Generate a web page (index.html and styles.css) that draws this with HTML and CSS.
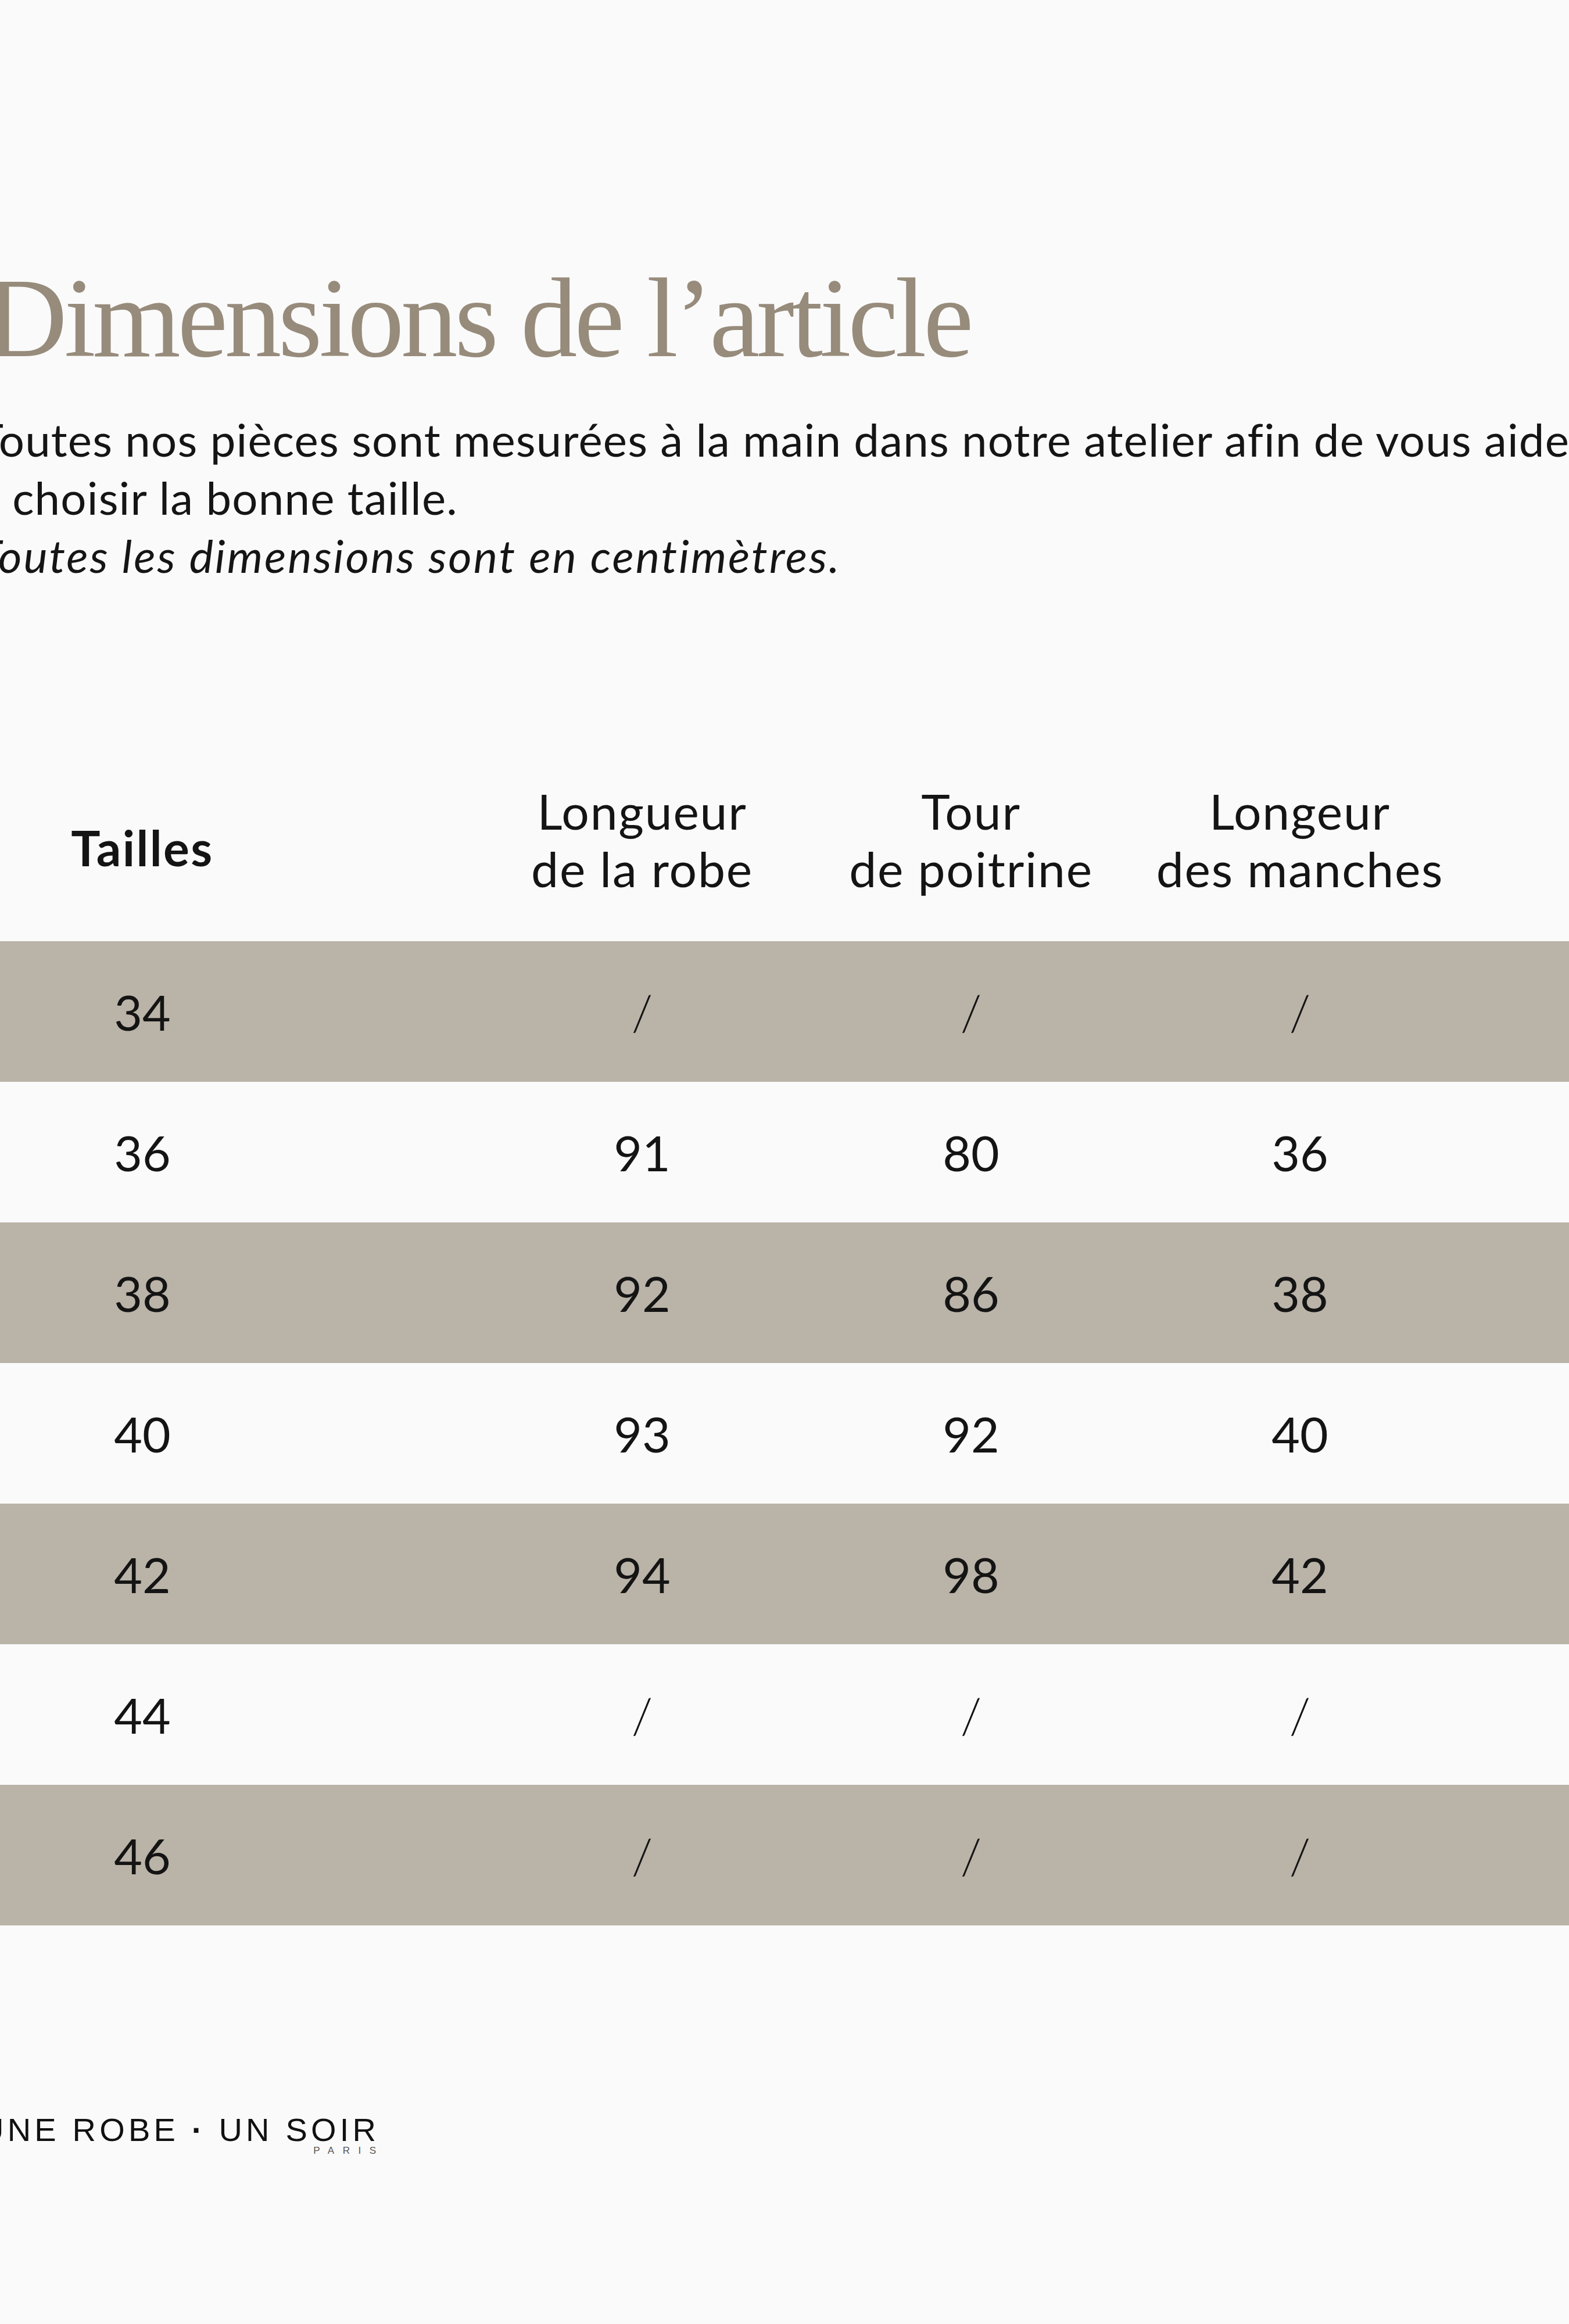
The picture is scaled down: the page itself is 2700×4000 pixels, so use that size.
FILE: index.html
```html
<!DOCTYPE html>
<html lang="fr">
<head>
<meta charset="utf-8">
<title>Dimensions de l’article</title>
<link rel="stylesheet" href="styles.css">
</head>
<body>
<main class="page">
  <section class="intro">
    <h1 class="title">Dimensions de l’article</h1>
    <p class="lead">Toutes nos pièces sont mesurées à la main dans notre atelier afin de vous aider<br>à choisir la bonne taille.<br><em class="note">Toutes les dimensions sont en centimètres.</em></p>
  </section>

  <section class="sizes">
    <div class="row head">
      <div class="cell size strong">Tailles</div>
      <div class="cell">Longueur<br>de la robe</div>
      <div class="cell">Tour<br>de poitrine</div>
      <div class="cell">Longeur<br>des manches</div>
    </div>
    <div class="row data band">
      <div class="cell size">34</div>
      <div class="cell slash">/</div>
      <div class="cell slash">/</div>
      <div class="cell slash">/</div>
    </div>
    <div class="row data">
      <div class="cell size">36</div>
      <div class="cell">91</div>
      <div class="cell">80</div>
      <div class="cell">36</div>
    </div>
    <div class="row data band">
      <div class="cell size">38</div>
      <div class="cell">92</div>
      <div class="cell">86</div>
      <div class="cell">38</div>
    </div>
    <div class="row data">
      <div class="cell size">40</div>
      <div class="cell">93</div>
      <div class="cell">92</div>
      <div class="cell">40</div>
    </div>
    <div class="row data band">
      <div class="cell size">42</div>
      <div class="cell">94</div>
      <div class="cell">98</div>
      <div class="cell">42</div>
    </div>
    <div class="row data">
      <div class="cell size">44</div>
      <div class="cell slash">/</div>
      <div class="cell slash">/</div>
      <div class="cell slash">/</div>
    </div>
    <div class="row data band">
      <div class="cell size">46</div>
      <div class="cell slash">/</div>
      <div class="cell slash">/</div>
      <div class="cell slash">/</div>
    </div>
  </section>

  <footer class="brand">
    <span class="brand-name">UNE ROBE <b class="brand-dot">·</b> UN SOIR</span>
    <span class="brand-city">PARIS</span>
  </footer>
</main>
</body>
</html>
```

FILE: styles.css
```css
html, body {
  margin: 0;
  padding: 0;
  background: #fafafa;
}

body {
  overflow-x: hidden;
}

.page {
  margin-left: -40px;
  width: 2740px;
  padding-top: 450px;
  font-family: Lato, "Noto Sans", sans-serif;
  color: #151515;
}

.title {
  margin: 0 0 0 15px;
  font-family: "Liberation Serif", "Times New Roman", serif;
  font-weight: 400;
  font-size: 195px;
  line-height: 195px;
  letter-spacing: -5.4px;
  color: #978b7b;
  white-space: nowrap;
}

.lead {
  margin: 61px 0 0;
  font-size: 78px;
  line-height: 100px;
  font-weight: 400;
  letter-spacing: 1.2px;
  white-space: nowrap;
}

.note {
  font-style: italic;
  letter-spacing: 2.9px;
}

.sizes {
  margin-top: 340px;
}

.row {
  display: grid;
  grid-template-columns: 862px repeat(3, 566px);
  align-items: center;
  font-size: 84px;
  line-height: 99px;
  text-align: center;
  color: #141414;
}

.row.head {
  padding-bottom: 76px;
  letter-spacing: 1.8px;
}

.row.data {
  height: 242px;
}

.band {
  background: #bab3a8;
}

.cell.size {
  padding-right: 292px;
}

.strong {
  font-weight: 700;
  padding-top: 26px;
  letter-spacing: 2.4px;
}

.slash {
  font-weight: 300;
}

.brand {
  margin-top: 324px;
  margin-left: 6px;
  display: inline-flex;
  flex-direction: column;
  align-items: flex-end;
  font-family: "Liberation Sans", Arial, sans-serif;
}

.brand-name {
  font-size: 56px;
  line-height: 56px;
  letter-spacing: 6.2px;
  margin-right: -6.2px;
  color: #111;
  white-space: nowrap;
}

.brand-dot {
  font-weight: 700;
}

.brand-city {
  margin-top: -1px;
  font-size: 17px;
  line-height: 17px;
  letter-spacing: 14.5px;
  margin-right: -14.5px;
  color: #555;
}
```
